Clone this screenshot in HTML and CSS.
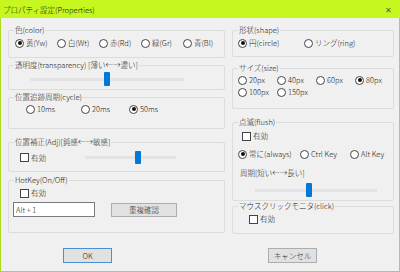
FILE: index.html
```html
<!DOCTYPE html>
<html lang="ja">
<head>
  <meta charset="UTF-8">
  <title>プロパティ設定(Properties)</title>
  <link rel="stylesheet" href="styles.css">
</head>
<body>
  <div class="window">
    <div class="titlebar">
      <span class="title">プロパティ設定(Properties)</span>
      <span class="close">✕</span>
    </div>

    <div class="main">
      <div class="col col-left">
        <div class="group g-color">
          <div class="group-title">色(color)</div>
          <div class="row">
            <span class="opt w42"><span class="radio on"></span>黄(Yw)</span>
            <span class="opt w42"><span class="radio"></span>白(Wt)</span>
            <span class="opt w42"><span class="radio"></span>赤(Rd)</span>
            <span class="opt w42"><span class="radio"></span>緑(Gr)</span>
            <span class="opt"><span class="radio"></span>青(Bl)</span>
          </div>
        </div>

        <div class="group g-trans">
          <div class="group-title">透明度(transparency) [薄い←→濃い]</div>
          <div class="slider">
            <div class="track"></div>
            <div class="thumb" style="left: 74px"></div>
          </div>
        </div>

        <div class="group g-cycle">
          <div class="group-title">位置追跡周期(cycle)</div>
          <div class="row">
            <span class="opt w55"><span class="radio"></span>10ms</span>
            <span class="opt w48"><span class="radio"></span>20ms</span>
            <span class="opt"><span class="radio on"></span>50ms</span>
          </div>
        </div>

        <div class="group g-adj">
          <div class="group-title">位置補正(Adj)[鈍感←→敏感]</div>
          <div class="row tall">
            <span class="opt w65"><span class="check"></span>有効</span>
            <div class="slider">
              <div class="track"></div>
              <div class="thumb" style="left: 50px"></div>
            </div>
          </div>
        </div>

        <div class="group g-hotkey">
          <div class="group-title">HotKey(On/Off)</div>
          <div class="row">
            <span class="opt"><span class="check"></span>有効</span>
          </div>
          <div class="key-row">
            <input class="key-input" type="text" value="Alt + 1">
            <button class="btn btn-wide">重複確認</button>
          </div>
        </div>
      </div>

      <div class="col col-right">
        <div class="group g-shape">
          <div class="group-title">形状(shape)</div>
          <div class="row">
            <span class="opt w66"><span class="radio on"></span>円(circle)</span>
            <span class="opt"><span class="radio"></span>リング(ring)</span>
          </div>
        </div>

        <div class="group g-size">
          <div class="group-title">サイズ(size)</div>
          <div class="row">
            <span class="opt w39"><span class="radio"></span>20px</span>
            <span class="opt w39"><span class="radio"></span>40px</span>
            <span class="opt w39"><span class="radio"></span>60px</span>
            <span class="opt"><span class="radio on"></span>80px</span>
          </div>
          <div class="row">
            <span class="opt w39"><span class="radio"></span>100px</span>
            <span class="opt"><span class="radio"></span>150px</span>
          </div>
        </div>

        <div class="group g-flush">
          <div class="group-title">点滅(flush)</div>
          <div class="row">
            <span class="opt"><span class="check"></span>有効</span>
          </div>
          <div class="row mode-row">
            <span class="opt w62"><span class="radio on"></span>常に(always)</span>
            <span class="opt w50"><span class="radio"></span>Ctrl Key</span>
            <span class="opt"><span class="radio"></span>Alt Key</span>
          </div>
          <div class="row period">周期[短い←→長い]</div>
          <div class="slider">
            <div class="track"></div>
            <div class="thumb" style="left: 51px"></div>
          </div>
        </div>

        <div class="group g-click">
          <div class="group-title">マウスクリックモニタ(click)</div>
          <div class="row">
            <span class="opt"><span class="check"></span>有効</span>
          </div>
        </div>
      </div>
    </div>

    <div class="buttons">
      <button class="btn btn-default">OK</button>
      <button class="btn">キャンセル</button>
    </div>
  </div>
</body>
</html>
```

FILE: styles.css
```css
* {
  box-sizing: border-box;
}
body {
  margin: 0;
  font-family: "Noto Sans CJK JP", "Noto Sans", sans-serif;
  font-size: 7.5px;
  font-weight: 300;
  color: #1a1a1a;
}
.window {
  width: 400px;
  height: 272px;
  background: #f0f0f0;
  border: 1px solid #a9dc1c;
  border-top: none;
}
.titlebar {
  height: 18px;
  margin: 0 -1px;
  padding: 0 8px 0 3px;
  background: #c6f81f;
  display: flex;
  align-items: center;
  justify-content: space-between;
}
.title {
  font-size: 7.5px;
  color: #111;
}
.close {
  font-size: 8px;
  color: #555;
}
.main {
  display: flex;
  gap: 7px;
  padding-left: 7px;
}
.col-left {
  width: 217px;
}
.col-right {
  width: 162px;
}

/* group boxes */
.group {
  --pad: 0px;
  padding-left: var(--pad);
  border: 1px solid #dcdcdc;
  border-radius: 2px;
}
.group-title {
  width: fit-content;
  height: 10px;
  line-height: 10px;
  margin: -6px 0 0 calc(5px - var(--pad));
  padding: 0 1px;
  background: #f0f0f0;
  white-space: nowrap;
}
.row {
  display: flex;
  align-items: center;
  height: 10px;
  line-height: 10px;
}
.row.tall {
  height: 13px;
}
.opt {
  display: flex;
  align-items: center;
  gap: 2px;
  white-space: nowrap;
}
.w39 { width: 39px; }
.w42 { width: 42px; }
.w48 { width: 48px; }
.w50 { width: 50px; }
.w55 { width: 55px; }
.w62 { width: 62px; }
.w65 { width: 65px; }
.w66 { width: 66px; }

.radio {
  flex: none;
  width: 9px;
  height: 9px;
  border: 1px solid #444;
  border-radius: 50%;
  background: #fff;
  display: flex;
  align-items: center;
  justify-content: center;
}
.radio.on::after {
  content: "";
  width: 4px;
  height: 4px;
  border-radius: 50%;
  background: #111;
}
.check {
  flex: none;
  width: 9px;
  height: 9px;
  border: 1px solid #444;
  background: #fff;
}

/* sliders */
.slider {
  position: relative;
  height: 14px;
  display: flex;
  align-items: center;
}
.track {
  width: 100%;
  height: 3px;
  background: #e3e3e3;
}
.thumb {
  position: absolute;
  top: 0;
  width: 6px;
  height: 14px;
  border-radius: 1px;
  background: #0078d7;
}

/* left column */
.g-color {
  --pad: 6px;
  margin-top: 12px;
  height: 28px;
}
.g-color .row {
  margin-top: 3px;
}
.g-trans {
  margin-top: 7px;
  height: 25px;
}
.g-trans .slider {
  width: 154px;
  margin: 2px 0 0 21px;
}
.g-cycle {
  --pad: 17px;
  margin-top: 7px;
  height: 32px;
}
.g-cycle .row {
  margin-top: 2px;
}
.g-adj {
  --pad: 11px;
  margin-top: 13px;
  height: 30px;
}
.g-adj .row {
  margin-top: 4px;
}
.g-adj .slider {
  width: 91px;
  height: 13px;
}
.g-adj .thumb {
  height: 13px;
}
.g-hotkey {
  --pad: 11px;
  margin-top: 8px;
  height: 53px;
}
.g-hotkey .row {
  margin-top: 3px;
}
.key-row {
  display: flex;
  align-items: center;
  margin: 4px 0 0 -7px;
}
.key-input {
  width: 82px;
  height: 15px;
  padding: 0 2px;
  border: 1px solid #7a7a7a;
  background: #fff;
  font: inherit;
  color: #1a1a1a;
}
.btn {
  width: 49px;
  height: 15px;
  padding: 0;
  border: 1px solid #adadad;
  background: #e1e1e1;
  font: inherit;
  color: #1a1a1a;
}
.btn-wide {
  width: 66px;
  height: 14px;
  margin-left: 16px;
}
.btn-default {
  border-color: #4a90d0;
}

/* right column */
.g-shape {
  --pad: 5px;
  margin-top: 12px;
  height: 27px;
}
.g-shape .row {
  margin-top: 3px;
}
.g-size {
  --pad: 5px;
  margin-top: 11px;
  height: 41px;
}
.g-size .row {
  margin-top: 2px;
}
.g-size .row:first-of-type {
  margin-top: 6px;
}
.g-flush {
  --pad: 9px;
  margin-top: 13px;
  height: 79px;
}
.g-flush .row {
  margin-top: 4px;
}
.g-flush .mode-row {
  margin: 8px 0 0 -4px;
}
.g-flush .period {
  margin: 9px 0 0 -2px;
}
.g-flush .slider {
  width: 122px;
  margin: 5px 0 0 13px;
}
.g-click {
  --pad: 16px;
  margin-top: 5px;
  height: 28px;
}
.g-click .row {
  margin-top: 3px;
}

.buttons {
  display: flex;
  gap: 156px;
  margin-top: 14px;
  padding-left: 62px;
}
```
